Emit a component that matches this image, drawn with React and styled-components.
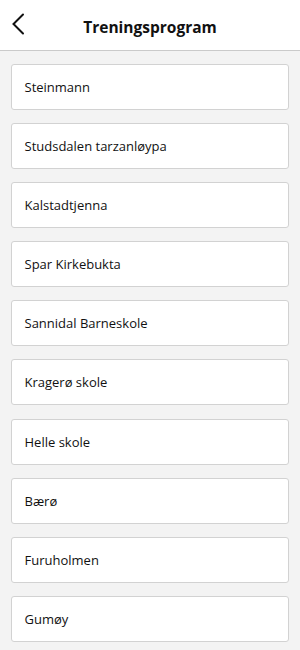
import React from "react";
import styled, { createGlobalStyle } from "styled-components";

const GlobalStyle = createGlobalStyle`
  body {
    margin: 0;
    background-color: #f3f3f3;
    font-family: "Open Sans", "Liberation Sans", sans-serif;
  }
`;

const programs = [
  "Steinmann",
  "Studsdalen tarzanløypa",
  "Kalstadtjenna",
  "Spar Kirkebukta",
  "Sannidal Barneskole",
  "Kragerø skole",
  "Helle skole",
  "Bærø",
  "Furuholmen",
  "Gumøy",
];

const App = () => {
  return (
    <>
      <GlobalStyle />
      <Page>
        <Header>
          <BackButton aria-label="Tilbake">
            <svg width="14" height="22" viewBox="0 0 14 22" fill="none">
              <path
                d="M12 1.5 L2.5 11 L12 20.5"
                stroke="#111"
                strokeWidth="2"
                strokeLinecap="round"
                strokeLinejoin="miter"
              />
            </svg>
          </BackButton>
          <Title>Treningsprogram</Title>
        </Header>
        <List>
          {programs.map((name) => (
            <Card key={name}>{name}</Card>
          ))}
        </List>
      </Page>
    </>
  );
};

const Page = styled.div`
  width: 300px;
  min-height: 650px;
  background-color: #f3f3f3;
`;

const Header = styled.header`
  position: relative;
  height: 50px;
  background-color: white;
  border-bottom: 1.5px solid #cacaca;
  display: flex;
  align-items: center;
  justify-content: center;
`;

const BackButton = styled.button`
  position: absolute;
  left: 11px;
  top: 13px;
  background: none;
  border: none;
  padding: 0;
  display: flex;
`;

const Title = styled.h1`
  margin: 0;
  font-size: 15.5px;
  font-weight: 700;
  color: #111;
  padding-top: 3px;
`;

const List = styled.div`
  display: flex;
  flex-direction: column;
  gap: 13.2px;
  padding: 12.5px 11px;
`;

const Card = styled.div`
  height: 44px;
  background-color: white;
  border: 1px solid #d2d2d2;
  border-radius: 3px;
  display: flex;
  align-items: center;
  padding-left: 12.5px;
  font-size: 13px;
  color: #111;
`;

export default App;
